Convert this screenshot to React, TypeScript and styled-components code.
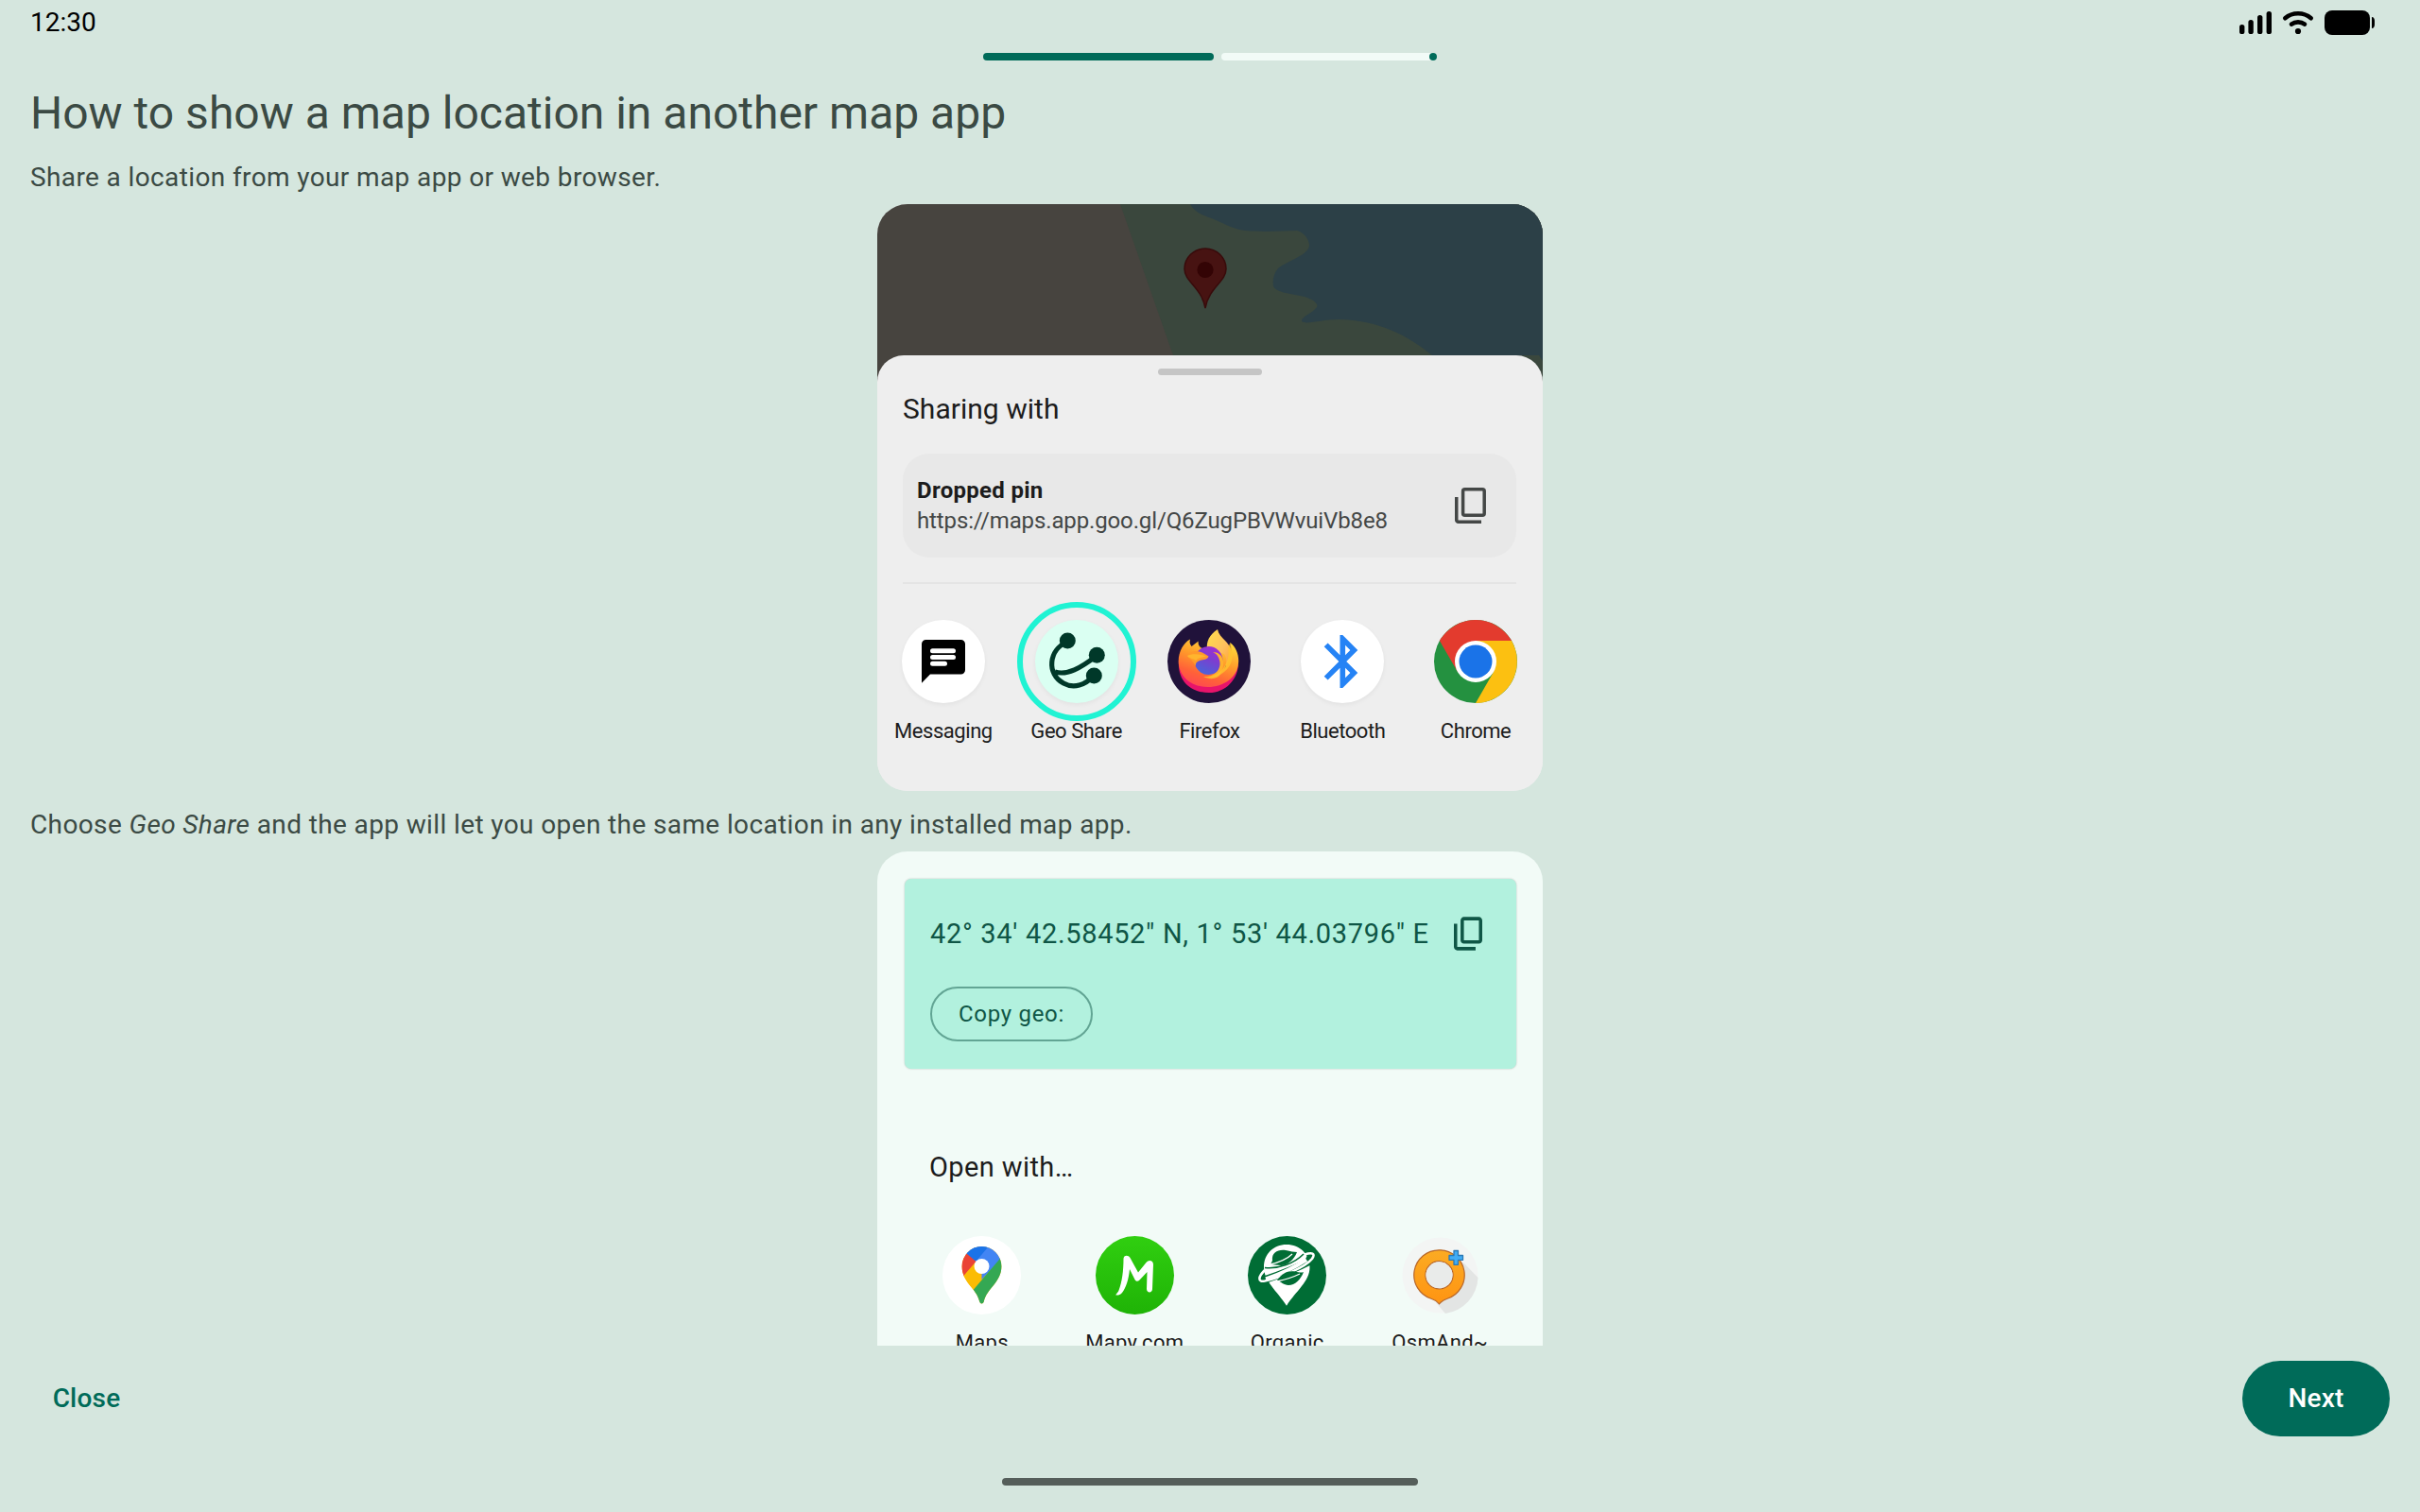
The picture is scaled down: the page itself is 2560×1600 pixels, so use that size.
import React from "react";
import styled, { createGlobalStyle } from "styled-components";

const color = {
  page: "#d5e6de",
  ink: "#3b4a44",
  primary: "#006b59",
  sheet: "#eeeeee",
  pale: "#f2fbf7",
  mint: "#b2f1de",
  onMint: "#0f5646",
  text: "#1c1c1c",
};

const Global = createGlobalStyle`
  *, *::before, *::after { box-sizing: border-box; }
  body { margin: 0; background: ${color.page}; font-family: Roboto, "Liberation Sans", sans-serif; }
  p, h1, h2 { margin: 0; font-weight: 400; }
  button { font-family: inherit; padding: 0; cursor: pointer; }
  svg { display: block; flex: none; }
`;

const Screen = styled.div`
  display: flex;
  flex-direction: column;
  width: 100%;
  height: 1600px;
  overflow: hidden;
  background: ${color.page};
`;

const StatusBar = styled.header`
  display: flex;
  flex: none;
  justify-content: space-between;
  align-items: center;
  height: 48px;
  padding: 0 48px 0 32px;
`;

const Clock = styled.time`
  font-size: 28px;
  line-height: 46px;
  color: #000;
`;

const Progress = styled.div`
  display: flex;
  flex: none;
  gap: 8px;
  width: 480px;
  height: 8px;
  margin: 8px auto 24px;
`;

const Segment = styled.span<{ $done?: boolean }>`
  display: flex;
  justify-content: flex-end;
  flex: ${(p) => (p.$done ? "0 0 244px" : "1")};
  height: 8px;
  border-radius: 4px;
  background: ${(p) => (p.$done ? color.primary : color.pale)};
`;

const StopDot = styled.i`
  width: 8px;
  height: 8px;
  border-radius: 50%;
  background: ${color.primary};
`;

const Content = styled.main`
  display: flex;
  flex: 1;
  flex-direction: column;
  min-height: 0;
  overflow: hidden;
  padding: 0 32px;
  color: ${color.ink};
`;

const Title = styled.h1`
  flex: none;
  margin-bottom: 16px;
  font-size: 48px;
  line-height: 64px;
`;

const Body = styled.p`
  flex: none;
  margin-bottom: 8px;
  font-size: 28px;
  line-height: 40px;
  letter-spacing: 0.38px;
`;

const Card = styled.section<{ $h: number }>`
  flex: none;
  width: 704px;
  height: ${(p) => p.$h}px;
  margin: 0 auto 16px;
  border-radius: 32px;
  overflow: hidden;
  background: ${color.pale};
  color: ${color.text};
`;

const ShareCard = styled(Card)`
  background: ${color.sheet};
`;

const Sheet = styled.div`
  display: flex;
  flex-direction: column;
  height: 461px;
  margin-top: -40px;
  padding: 14px 28px 0 27px;
  position: relative;
  border-radius: 28px 28px 0 0;
  background: ${color.sheet};
`;

const Handle = styled.i`
  width: 110px;
  height: 7px;
  margin: 0 auto 16px;
  border-radius: 4px;
  background: #c5c5c5;
`;

const SheetTitle = styled.h2`
  font-size: 30px;
  line-height: 40px;
  letter-spacing: 0.03px;
  margin-bottom: 27px;
`;

const LinkBox = styled.div`
  display: flex;
  justify-content: space-between;
  align-items: center;
  height: 110px;
  padding: 0 32px 0 15px;
  border-radius: 28px;
  background: #e8e8e8;
`;

const LinkName = styled.p`
  font-size: 24px;
  font-weight: 700;
  line-height: 32px;
  letter-spacing: 0.3px;
`;

const LinkUrl = styled.p`
  font-size: 24px;
  line-height: 32px;
  letter-spacing: -0.13px;
  color: #444746;
`;

const Divider = styled.hr`
  width: 100%;
  height: 2px;
  margin: 26px 0 38px;
  border: 0;
  background: #e4e4e4;
`;

const AppRow = styled.div<{ $bleed?: boolean }>`
  display: flex;
  margin: ${(p) => (p.$bleed ? "0 -27.5px" : "53px 28px 0 30px")};
`;

const AppItem = styled.div<{ $gap: number }>`
  display: flex;
  flex: 1 1 0;
  min-width: 0;
  flex-direction: column;
  align-items: center;
  gap: ${(p) => p.$gap}px;
`;

const AppLabel = styled.span<{ $size: number; $spacing: number }>`
  font-size: ${(p) => p.$size}px;
  line-height: 28px;
  letter-spacing: ${(p) => p.$spacing}px;
  white-space: nowrap;
`;

const Disc = styled.span<{ $size: number; $bg: string; $shadow?: boolean }>`
  position: relative;
  width: ${(p) => p.$size}px;
  height: ${(p) => p.$size}px;
  border-radius: 50%;
  background: ${(p) => p.$bg};
  box-shadow: ${(p) => (p.$shadow ? "0 2px 5px rgba(0,0,0,.05)" : "none")};
`;

const Ring = styled.i`
  position: absolute;
  inset: -19px;
  border: 6px solid #20f3d3;
  border-radius: 50%;
`;

const CoordBox = styled.div`
  display: flex;
  flex-direction: column;
  align-items: flex-start;
  height: 201px;
  margin: 29px 28px 84px 28.5px;
  padding: 36px 36px 0 27.5px;
  border-radius: 7px;
  background: ${color.mint};
  color: ${color.onMint};
  box-shadow: 0 0 2px rgba(0, 0, 0, 0.25);
`;

const CoordLine = styled.div`
  display: flex;
  justify-content: space-between;
  align-items: center;
  width: 100%;
  height: 44px;
`;

const Coords = styled.p`
  font-size: 29px;
  line-height: 44px;
  letter-spacing: 0.68px;
  white-space: nowrap;
`;

const Chip = styled.button`
  width: 172px;
  height: 58px;
  margin-top: 34px;
  border: 2px solid #62a594;
  border-radius: 29px;
  background: none;
  color: ${color.onMint};
  font-size: 24px;
  line-height: 30px;
  letter-spacing: 0.7px;
`;

const OpenWith = styled.h2`
  margin-left: 55px;
  font-size: 29px;
  line-height: 40px;
  letter-spacing: 0.4px;
`;

const BottomBar = styled.footer`
  display: flex;
  flex: none;
  justify-content: space-between;
  height: 136px;
  padding: 16px 32px 0;
`;

const Action = styled.button<{ $filled?: boolean }>`
  width: ${(p) => (p.$filled ? 156 : 119)}px;
  height: 80px;
  padding-bottom: 1px;
  border: 0;
  border-radius: 40px;
  background: ${(p) => (p.$filled ? color.primary : "transparent")};
  color: ${(p) => (p.$filled ? "#fff" : color.primary)};
  font-size: 28px;
  font-weight: 500;
  letter-spacing: 0.2px;
`;

const NavArea = styled.div`
  flex: none;
  height: 40px;
  padding-top: 4px;
`;

const HomeBar = styled.i`
  display: block;
  width: 440px;
  height: 8px;
  margin: 0 auto;
  border-radius: 4px;
  background: #555e5a;
`;

const StatusIcons = () => (
  <svg width="144" height="28" viewBox="0 0 144 28">
    <rect x="1" y="16" width="5.4" height="10" rx="2.6" />
    <rect x="10.4" y="11" width="5.4" height="15" rx="2.6" />
    <rect x="20" y="6" width="5.4" height="20" rx="2.6" />
    <rect x="29.6" y="2" width="5.4" height="24" rx="2.6" />
    <path d="M49.300 9.200C57 2.600 69 2.600 76.700 9.200M56 15.600C60 12.600 66 12.600 70 15.600" fill="none" stroke="#000" strokeWidth="4.6" strokeLinecap="round" />
    <circle cx="63" cy="23" r="3.100" />
    <rect x="91" y="1" width="48" height="26" rx="8" />
    <path d="M141 8c2 0 3 2 3 4v4c0 2-1 4-3 4z" />
  </svg>
);

const MapArt = () => (
  <svg width="704" height="200" viewBox="0 0 704 200">
    <rect width="704" height="200" fill="#47443f" />
    <path d="M257 0H704V200H327z" fill="#3a473d" />
    <path d="M331 0C336 9 345 12 356 16C370 22 378 27 390 28C412 30 428 28 444 28C452 30 457 38 457 44C456 54 434 60 424 68C419 74 418 81 419 87C422 94 440 95 452 98C462 101 467 106 465 109C460 116 448 119 449 124C454 128 470 122 488 122C530 123 560 138 587 160H700L704 166V0z" fill="#2c4047" />
    <path d="M347 110C343 88 325 82 325 68.500A22 21.500 0 0 1 369 68.500C369 82 351 88 347 110z" fill="#471312" stroke="#380b0b" strokeWidth="1.500" />
    <circle cx="347" cy="69.500" r="8.600" fill="#330405" />
  </svg>
);

const CopyThin = () => (
  <svg width="33" height="38" viewBox="0 0 33 38" fill="none" stroke="#444746" strokeWidth="3.500">
    <rect x="8.600" y="1.750" width="22.600" height="27.500" rx="2" />
    <path d="M1.750 10V34a2 2 0 0 0 2 2.200H28" />
  </svg>
);

const CopyBold = () => (
  <svg width="30" height="36" viewBox="120 -880 680 800" fill={color.onMint}>
    <path d="M360-240q-33 0-56.500-23.500T280-320v-480q0-33 23.500-56.500T360-880h360q33 0 56.500 23.500T800-800v480q0 33-23.500 56.500T720-240H360Zm0-80h360v-480H360v480ZM200-80q-33 0-56.500-23.500T120-160v-560h80v560h440v80H200Z" />
  </svg>
);

const MessagingArt = () => (
  <svg width="88" height="88" viewBox="0 0 88 88">
    <path d="M25.500 21H62.500a4.500 4.500 0 0 1 4.500 4.500V53a4.500 4.500 0 0 1-4.500 4.500H30L21 66.700V25.500A4.500 4.500 0 0 1 25.500 21z" />
    <path d="M32.500 32.700H54.500M32.500 39.500H54.500M32.500 46.300H45.500" stroke="#fff" strokeWidth="5" strokeLinecap="round" />
  </svg>
);

const GeoShareArt = () => (
  <svg width="88" height="88" viewBox="0 0 88 88" fill="#003829">
    <path d="M34 23C14 32 12 57 30 67C41 73 53 69 62 59M21 55C34 59 48 51 65 38" fill="none" stroke="#003829" strokeWidth="5.200" />
    <circle cx="34.300" cy="22" r="8.500" />
    <circle cx="65.300" cy="37.200" r="8.500" />
    <circle cx="62.300" cy="59" r="8.500" />
  </svg>
);

const FirefoxArt = () => (
  <svg width="88" height="88" viewBox="0 0 88 88">
    <defs>
      <linearGradient id="ffBody" x1=".75" y1=".1" x2=".35" y2="1">
        <stop offset="0" stopColor="#ffd43a" />
        <stop offset=".4" stopColor="#ff9a2a" />
        <stop offset=".75" stopColor="#ff6238" />
        <stop offset="1" stopColor="#ff4a50" />
      </linearGradient>
      <linearGradient id="ffTail" x1="0" y1="0" x2="1" y2="1">
        <stop offset="0" stopColor="#ffe14a" />
        <stop offset=".55" stopColor="#ffbf5e" />
        <stop offset="1" stopColor="#ff9a2a" />
      </linearGradient>
      <linearGradient id="ffGlobe" x1=".75" y1="0" x2=".3" y2=".9">
        <stop offset="0" stopColor="#a42bd0" />
        <stop offset=".5" stopColor="#7a3fd0" />
        <stop offset="1" stopColor="#4f60d8" />
      </linearGradient>
    </defs>
    <path d="M12 42C10 66 26 77 44 77C62 77 76 62 75 43C70 60 56 70 42 69C28 68 16 58 12 42z" fill="#e8146b" />
    <path d="M53 10C44 16 41 23 42 31L66 52C72 38 68 30 62 23C57 18 54 15 53 10z" fill="url(#ffTail)" />
    <path d="M24 20.500C23 24 24 26 25.500 28L32.700 22.500C32 26 34 29 37 30L60 36C64 42 62 48 60 52C66 44 69 34 66.300 24C73 29 76 38 75 46C74 61 59 71 43 71C25 71 12 60 11.700 44C11.500 34 17 24 24 20.500z" fill="url(#ffBody)" />
    <circle cx="43.500" cy="43" r="15" fill="url(#ffGlobe)" />
    <path d="M48 34C58 34 63 45 56 57C54 62 46 64 38 60C52 61 60 49 53 38C52 36 50 35 48 34z" fill="#ffb12e" />
    <path d="M66.300 24C71 37 69 48 60 55C54 60 49 61 45 60C59 58 67 41 64 30z" fill="#ffc62f" opacity=".75" />
    <path d="M24 35C31 30 38 35 43.500 38.500C43 41 40 42 36 42.500C31 44 30 45 29.600 49C27 42 22 41 21 38z" fill="#ff9a2a" />
    <path d="M21 38C26 35 35 36 41 38.500C36 40 32 40 30 43C28 41 23 41 21 38z" fill="#ffb52e" />
  </svg>
);

const BluetoothArt = () => (
  <svg width="88" height="88" viewBox="0 0 88 88">
    <path transform="translate(10.700 10.400) scale(2.800)" fill="#2583f5" d="M17.710 7.710L12 2h-1v7.590L6.410 5 5 6.410 10.590 12 5 17.590 6.410 19 11 14.410V22h1l5.710-5.710-4.300-4.290 4.300-4.290zM13 5.830l1.880 1.880L13 9.590V5.830zm1.880 10.460L13 18.170v-3.760l1.880 1.880z" />
  </svg>
);

const ChromeArt = () => (
  <svg width="88" height="88" viewBox="0 0 88 88">
    <circle cx="44" cy="44" r="44" fill="#249140" />
    <path d="M44 22H82A44 44 0 0 1 44 88L63 55z" fill="#fcc011" />
    <path d="M5.900 22A44 44 0 0 1 82.100 22H44L25 55z" fill="#e33b2e" />
    <circle cx="44" cy="44" r="22" fill="#fff" />
    <circle cx="44" cy="44" r="17.500" fill="#1a73e8" />
  </svg>
);

const MapsArt = () => (
  <svg width="83" height="83" viewBox="0 0 83 83">
    <clipPath id="gmPin">
      <path d="M41.500 11A20.900 21 0 0 1 62.400 32C62.400 49 47 55 43.700 69.500C43 72 40 72 39.300 69.500C36 55 20.600 49 20.600 32A20.900 21 0 0 1 41.500 11z" />
    </clipPath>
    <g clipPath="url(#gmPin)">
      <rect width="83" height="83" fill="#fbbc04" />
      <path d="M10 5H70V16L41.500 46V32z" fill="#4285f4" />
      <path d="M58 0L34 28.500L20 16V0z" fill="#1a73e8" />
      <path d="M25.500 18.500L41.500 32L21 43.500L10 30z" fill="#ea4335" />
      <path d="M41.500 32L34.500 28L20 44.700L33 57.500z" fill="#fbbc04" />
      <path d="M62.500 22L33 56.500L30 80H80V22z" fill="#34a853" />
    </g>
    <circle cx="41.500" cy="32" r="8" fill="#fff" />
  </svg>
);

const MapyArt = () => (
  <svg width="83" height="83" viewBox="0 0 83 83">
    <path d="M29.500 24C29.500 20 34.500 19.500 36.500 23L45 38.500L53.500 28C56 24.500 61 25.500 61 30L60 56C60 60.500 54 60.500 54 56L54.500 38L46.500 46.500C44.500 48.500 42.500 48 41.500 46L36 35C35 46 32 55 28 60C26 62.500 23.500 62.800 21.500 62.500C21 61.500 23 61 24.500 57.500C28 49 29.500 36 29.500 24z" fill="#fff" />
  </svg>
);

const OrganicArt = () => (
  <svg width="83" height="83" viewBox="0 0 83 83">
    <path d="M41 9C27 9 17 19 17 33C17 48 31 58 41 73.700C51 58 65.500 48 65.500 33C65.500 19 55 9 41 9z" fill="#fff" />
    <path d="M17 46.500Q46 37 67 26" fill="none" stroke="#006d35" strokeWidth="8" />
    <path d="M60 26L66 15L74 20L68 32z" fill="#006d35" />
    <path d="M18 36C11 43 10 49 18 47.500C34 44 61 33 68 24C72 18 68 17 60 19.500" fill="none" stroke="#fff" strokeWidth="2.600" />
    <path d="M19 45.500Q44 37 62 25" fill="none" stroke="#fff" strokeWidth="4" />
    <path d="M18 33.500C33 35 49 29 59 19" fill="none" stroke="#006d35" strokeWidth="1.600" />
    <path d="M26 26C25 17 32 14 40 15C45 16 49 17 52 17C49 25 42 31 35 31C31 31 27 30 24 30z" fill="#006d35" />
    <path d="M31 47C36 39 43 36 50 37.500C54 38.500 57 39 59 38C56 46 50 52 43 52C38 52 35 48 31 47z" fill="#006d35" />
    <path d="M22 30.500C33 28 42 24 47 19M31 48C40 46 49 43 55 40" fill="none" stroke="#fff" strokeWidth="1.300" />
  </svg>
);

const OsmAndArt = () => (
  <svg width="83" height="83" viewBox="0 0 83 83">
    <defs>
      <linearGradient id="osmFill" x1="0" y1="0" x2="0" y2="1">
        <stop offset="0" stopColor="#fbab23" />
        <stop offset="1" stopColor="#ff9412" />
      </linearGradient>
    </defs>
    <circle cx="41.500" cy="41.500" r="40" fill="#f3f5f4" />
    <path d="M66 28L81.500 44A40 40 0 0 1 47 82L34 67z" fill="#e3e5e4" />
    <path d="M40.500 14.800A26.400 26.400 0 0 1 49 66.300C45 67.500 43 69 40.500 71.800C38 69 36 67.500 32 66.300A26.400 26.400 0 0 1 40.500 14.800zM40.500 26.700A14.600 14.600 0 1 0 40.500 55.900A14.600 14.600 0 1 0 40.500 26.700z" fill="url(#osmFill)" stroke="#b8672a" strokeWidth="1.200" />
    <circle cx="40.500" cy="41.300" r="14" fill="#e9ebea" />
    <path d="M56 15.500h4.500v5h5v4.800h-5v5H56v-5h-5v-4.800h5z" fill="#41acf5" stroke="#2b78b5" strokeWidth="1.300" strokeLinejoin="round" />
  </svg>
);

const shareTargets = [
  { name: "Messaging", bg: "#fff", art: <MessagingArt />, shadow: true },
  { name: "Geo Share", bg: "#dafff2", art: <GeoShareArt />, shadow: true, ringed: true },
  { name: "Firefox", bg: "#20123a", art: <FirefoxArt /> },
  { name: "Bluetooth", bg: "#fff", art: <BluetoothArt />, shadow: true },
  { name: "Chrome", bg: "transparent", art: <ChromeArt /> },
];

const mapApps = [
  { name: "Maps", bg: "#fff", art: <MapsArt /> },
  { name: "Mapy.com", bg: "linear-gradient(#30cf10, #1fb306)", art: <MapyArt /> },
  { name: "Organic", bg: "#006d35", art: <OrganicArt /> },
  { name: "OsmAnd~", bg: "transparent", art: <OsmAndArt /> },
];

export default function App() {
  return (
    <Screen>
      <Global />
      <StatusBar>
        <Clock>12:30</Clock>
        <StatusIcons />
      </StatusBar>
      <Progress>
        <Segment $done />
        <Segment>
          <StopDot />
        </Segment>
      </Progress>
      <Content>
        <Title>How to show a map location in another map app</Title>
        <Body>Share a location from your map app or web browser.</Body>
        <ShareCard $h={621}>
          <MapArt />
          <Sheet>
            <Handle />
            <SheetTitle>Sharing with</SheetTitle>
            <LinkBox>
              <div>
                <LinkName>Dropped pin</LinkName>
                <LinkUrl>https://maps.app.goo.gl/Q6ZugPBVWvuiVb8e8</LinkUrl>
              </div>
              <CopyThin />
            </LinkBox>
            <Divider />
            <AppRow $bleed>
              {shareTargets.map((t) => (
                <AppItem key={t.name} $gap={16}>
                  <Disc $size={88} $bg={t.bg} $shadow={t.shadow}>
                    {t.art}
                    {t.ringed && <Ring />}
                  </Disc>
                  <AppLabel $size={22} $spacing={-0.45}>
                    {t.name}
                  </AppLabel>
                </AppItem>
              ))}
            </AppRow>
          </Sheet>
        </ShareCard>
        <Body>
          Choose <em>Geo Share</em> and the app will let you open the same location in any installed map app.
        </Body>
        <Card $h={760}>
          <CoordBox>
            <CoordLine>
              <Coords>42° 34' 42.58452" N, 1° 53' 44.03796" E</Coords>
              <CopyBold />
            </CoordLine>
            <Chip>Copy geo:</Chip>
          </CoordBox>
          <OpenWith>Open with…</OpenWith>
          <AppRow>
            {mapApps.map((a) => (
              <AppItem key={a.name} $gap={16}>
                <Disc $size={83} $bg={a.bg}>
                  {a.art}
                </Disc>
                <AppLabel $size={22} $spacing={0.3}>
                  {a.name}
                </AppLabel>
              </AppItem>
            ))}
          </AppRow>
        </Card>
      </Content>
      <BottomBar>
        <Action>Close</Action>
        <Action $filled>Next</Action>
      </BottomBar>
      <NavArea>
        <HomeBar />
      </NavArea>
    </Screen>
  );
}
